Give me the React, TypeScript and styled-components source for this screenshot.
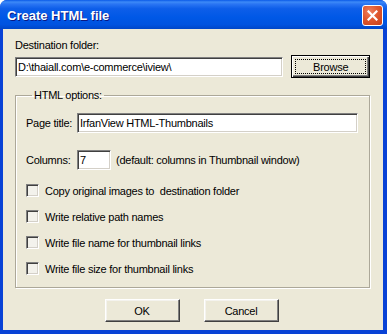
import React from 'react';
import styled, { createGlobalStyle } from 'styled-components';

const GlobalStyle = createGlobalStyle`
  html, body {
    margin: 0;
    padding: 0;
    background: #ffffff;
  }
  body {
    font-family: "Liberation Sans", Arial, sans-serif;
    font-size: 11px;
    letter-spacing: -0.25px;
    color: #000;
  }
  * {
    box-sizing: border-box;
  }
`;

const Window = styled.div`
  width: 387px;
  height: 334px;
  display: flex;
  flex-direction: column;
  background: #0842d6;
  border-radius: 7px 7px 0 0;
  overflow: hidden;
`;

const TitleBar = styled.div`
  height: 29px;
  flex-shrink: 0;
  display: flex;
  align-items: center;
  justify-content: space-between;
  padding: 0 4px 0 7px;
  background: linear-gradient(
    to bottom,
    #0a5ae8 0%,
    #3d8af7 7%,
    #2a75f3 14%,
    #0d5ee9 30%,
    #0058e6 60%,
    #0053e0 85%,
    #0046c8 100%
  );
`;

const Title = styled.span`
  font-family: "Liberation Sans", Arial, sans-serif;
  font-weight: bold;
  font-size: 13px;
  letter-spacing: 0;
  color: #ffffff;
  text-shadow: 1px 1px #0a1883;
  margin-top: 1px;
`;

const CloseButton = styled.button`
  width: 21px;
  height: 21px;
  padding: 0;
  margin-top: 1px;
  border: 1px solid #ffffff;
  border-radius: 3px;
  background: radial-gradient(circle at 35% 30%, #ee8060 0%, #e0582f 45%, #c7401a 100%);
  display: flex;
  align-items: center;
  justify-content: center;
  cursor: default;
`;

const Body = styled.div`
  flex: 1;
  background: #ece9d8;
  margin: 0 4px 4px 3px;
  padding: 10px 13px 0 12px;
  display: flex;
  flex-direction: column;
`;

const Label = styled.div`
  line-height: 13px;
  white-space: pre;
`;

const FolderRow = styled.div`
  display: flex;
  align-items: center;
  margin-top: 3px;
  height: 23px;
`;

const TextField = styled.input<{ $width: number }>`
  width: ${({ $width }) => $width}px;
  height: 20px;
  padding: 0 2px;
  font-family: inherit;
  font-size: 11px;
  letter-spacing: -0.25px;
  color: #000;
  background: #ffffff;
  border: 1px solid;
  border-color: #808080 #ffffff #ffffff #808080;
  box-shadow: inset 1px 1px #404040, inset -1px -1px #d4d0c8;
  outline: none;
`;

const PushButton = styled.button<{ $default?: boolean }>`
  width: ${({ $default }) => ($default ? 79 : 75)}px;
  height: 23px;
  padding: ${({ $default }) => ($default ? '3px' : '0')};
  font-family: inherit;
  font-size: 11px;
  letter-spacing: -0.25px;
  color: #000;
  background: #ece9d8;
  border: 1px solid;
  border-color: ${({ $default }) => ($default ? '#000000' : '#ffffff #404040 #404040 #ffffff')};
  box-shadow: ${({ $default }) =>
    $default
      ? 'inset 1px 1px #ffffff, inset -1px -1px #404040, inset -2px -2px #808080'
      : 'inset -1px -1px #808080, inset 1px 1px #f4f3ee'};
  cursor: default;
`;

const FocusRect = styled.span`
  display: flex;
  align-items: center;
  justify-content: center;
  height: 100%;
  border: 1px dotted #000;
`;

const BrowseButton = styled(PushButton)`
  margin-left: 8px;
`;

const Group = styled.fieldset`
  width: 355px;
  height: 199px;
  margin: 11px 0 0 0;
  padding: 11px 10px 0 10px;
  border: 1px solid #aca899;
  box-shadow: 1px 1px #ffffff, inset 1px 1px #ffffff;
  display: flex;
  flex-direction: column;
`;

const GroupCaption = styled.legend`
  line-height: 13px;
  padding: 0 2px;
  margin-left: 6px;
`;

const FieldRow = styled.div<{ $gap?: number }>`
  display: flex;
  align-items: center;
  height: 20px;
  margin-top: ${({ $gap }) => $gap ?? 0}px;
`;

const FieldLabel = styled.span`
  width: 51px;
  flex-shrink: 0;
`;

const Hint = styled.span`
  margin-left: 5px;
`;

const CheckRow = styled.label<{ $gap: number }>`
  display: flex;
  align-items: center;
  height: 13px;
  margin-top: ${({ $gap }) => $gap}px;
  white-space: pre;
`;

const CheckBox = styled.input`
  appearance: none;
  width: 13px;
  height: 13px;
  margin: 0 6px 0 0;
  flex-shrink: 0;
  background: #f3f2ec;
  border: 1px solid;
  border-color: #808080 #ffffff #ffffff #808080;
  box-shadow: inset 1px 1px #404040, inset -1px -1px #d4d0c8;
`;

const ButtonRow = styled.div`
  display: flex;
  justify-content: center;
  gap: 24px;
  margin-top: 11px;
  padding-right: 2px;
`;

const options = [
  'Copy original images to  destination folder',
  'Write relative path names',
  'Write file name for thumbnail links',
  'Write file size for thumbnail links',
];

export default function App() {
  return (
    <>
      <GlobalStyle />
      <Window>
        <TitleBar>
          <Title>Create HTML file</Title>
          <CloseButton aria-label="Close">
            <svg width="11" height="11" viewBox="0 0 11 11">
              <path d="M1.5 1.5 L9.5 9.5 M9.5 1.5 L1.5 9.5" stroke="#ffffff" strokeWidth="2.2" strokeLinecap="square" />
            </svg>
          </CloseButton>
        </TitleBar>
        <Body>
          <Label>Destination folder:</Label>
          <FolderRow>
            <TextField $width={270} defaultValue="D:\thaiall.com\e-commerce\iview\" />
            <BrowseButton $default>
              <FocusRect>Browse</FocusRect>
            </BrowseButton>
          </FolderRow>
          <Group>
            <GroupCaption>HTML options:</GroupCaption>
            <FieldRow>
              <FieldLabel>Page title:</FieldLabel>
              <TextField $width={281} defaultValue="IrfanView HTML-Thumbnails" />
            </FieldRow>
            <FieldRow $gap={17}>
              <FieldLabel>Columns:</FieldLabel>
              <TextField $width={34} defaultValue="7" />
              <Hint>(default: columns in Thumbnail window)</Hint>
            </FieldRow>
            {options.map((text, i) => (
              <CheckRow key={text} $gap={i === 0 ? 14 : 13}>
                <CheckBox type="checkbox" />
                {text}
              </CheckRow>
            ))}
          </Group>
          <ButtonRow>
            <PushButton>OK</PushButton>
            <PushButton>Cancel</PushButton>
          </ButtonRow>
        </Body>
      </Window>
    </>
  );
}
